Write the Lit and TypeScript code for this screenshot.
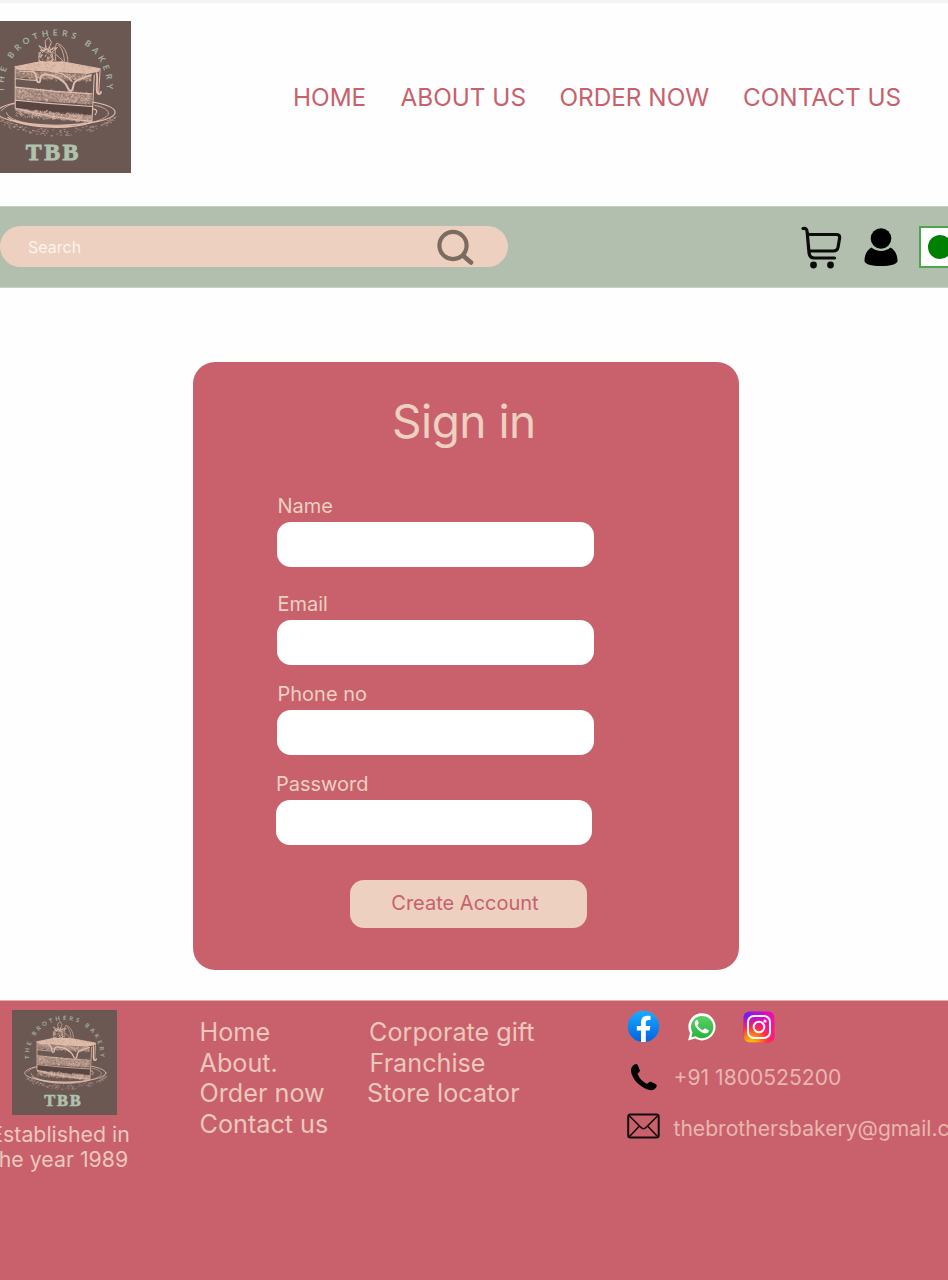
import { LitElement, html, svg, css } from "lit";
import { customElement, property } from "lit/decorators.js";

/** Small deterministic generator so the engraved texture is stable. */
function randomizer(seed: number) {
  let s = seed;
  return () => {
    s = (s * 16807) % 2147483647;
    return s / 2147483647;
  };
}

function strokes(seed: number, count: number, x0: number, x1: number, yTop: number, height: number, slope: number, len: number) {
  const r = randomizer(seed);
  let d = "";
  for (let i = 0; i < count; i++) {
    const x = x0 + r() * (x1 - x0);
    const y = yTop + r() * height + (x - x0) * slope;
    d += `M${x.toFixed(1)} ${y.toFixed(1)}l${(len * (r() - 0.3)).toFixed(1)} ${(len * (r() - 0.5)).toFixed(1)}`;
  }
  return d;
}

function crumbs() {
  const r = randomizer(77);
  let d = "";
  for (let i = 0; i < 110; i++) {
    const a = 0.06 * Math.PI + r() * 0.88 * Math.PI;
    const x = 160 + Math.cos(a) * (116 + r() * 10);
    const y = 192 + Math.sin(a) * (30 + r() * 17);
    d += `M${x.toFixed(1)} ${y.toFixed(1)}l${(1.5 + r() * 2).toFixed(1)} ${(r() * 3 - 1.5).toFixed(1)}`;
  }
  return d;
}

const HATCH_TOP = strokes(11, 230, 77, 230, 101, 17, 0.06, 7);
const HATCH_MID = strokes(23, 420, 77, 230, 138, 24, 0.07, 6);
const HATCH_LOW = strokes(37, 300, 77, 230, 181, 16, 0.09, 6);
const DARK_FLECKS = strokes(51, 90, 80, 230, 86, 12, 0.04, 7);
const FRUIT = strokes(63, 60, 124, 153, 56, 32, 0, 8);
const CRUMBS = crumbs();

@customElement("bakery-logo")
export class BakeryLogo extends LitElement {
  static styles = css`
    :host { display: block; }
    .art { display: block; width: 100%; height: 100%; }
    .ring { font: 700 17.5px Lato, sans-serif; fill: #a3b1a0; }
    .mark { font: 700 48px "Liberation Serif", serif; letter-spacing: 5px; fill: #afc2ae; stroke: #afc2ae; stroke-width: 1.8; }
  `;
  render() {
    return html`<svg class="art" viewBox="0 0 315 315" role="img" aria-label="The Brothers Bakery">
      <rect width="315" height="315" fill="#6b5853" />
      <path id="ring" d="M51 147V137A107 107 0 0 1 265 137V170" fill="none" />
      <text class="ring" textLength="350" lengthAdjust="spacing"><textPath href="#ring" textLength="350" lengthAdjust="spacing">THE BROTHERS BAKERY</textPath></text>
      <g fill="none" stroke="#e0bcab" stroke-linecap="round" stroke-linejoin="round">
        <ellipse cx="160" cy="189" rx="122" ry="27" stroke-width="2.4" />
        <path d="M46 186c12-12 22-14 30-15M57 190c3 18 60 28 112 27 50-1 92-10 99-24 2-8-12-16-28-18" stroke-width="1.600" />
        <path d="M60 200c28 21 120 27 170 11M73 206c28 12 80 14 116 11" stroke-width="2.6" />
      </g>
      <path d="M75 94L133 83 251 98 246 164 236 167 234 208C180 204 126 195 75 181Z" fill="#6b5853" />
      <path d="M75 95L125 84 170 84 251 99 248 105 225 110 78 101Z" fill="#dfbbaa" />
      <path d="M75 180l14-3c-1 8 50 16 145 18v13c-70-1-114-11-159-22z" fill="#c9a99b" opacity=".6" />
      <path d="M76 137q78 9 158 15v20q-80-4-158-10z" fill="#d1b0a2" opacity=".42" />
      <path d="M76 102l157 10v12q-80-5-157-7z" fill="#d1b0a2" opacity=".34" />
      <path d="M76 164q78 8 158 13v17q-84-4-158-14z" fill="#594642" />
      <g fill="none" stroke="#e0bcab" stroke-linecap="round" stroke-linejoin="round">
        <path d=${HATCH_TOP} stroke-width=".9" />
        <path d=${HATCH_MID} stroke-width=".9" />
        <path d=${HATCH_LOW} stroke-width="1" />
        <path d="M75 94L75 181Q150 201 234 208L239 112M75 95L130 84M170 84L251 99L248 150M76 119q20 3 42 4M76 137q80 10 158 14M76 164q78 9 158 13" stroke-width="2.2" />
        <path d="M110 104c8 4 8 8 10 18 1 7 7 7 7-1 0-8 5-11 13-10 20 3 30 8 39 19 5 6 6 15 11 15 7 0 3-13 9-19 7-6 20-9 33-14M244 108c3 14-2 31 1 40 2 5 7 4 8-1" stroke-width="4" />
        <path d="M148 105c22 1 34 7 45 20M84 104l24 1M236 182q13 1 5 12" stroke-width="2.4" />
        <path d=${FRUIT} stroke-width="1.500" />
        <path d="M125 82c-4-10 1-21 13-23 12 1 18 12 13 24-8 5-18 4-26-1ZM139 60l-2-18 7-8 6 10-7 18M139 59l-15-8 10 13M147 60l16-5-14 11" stroke-width="1.800" />
        <path d="M159 82c-2-18-1-30 2-36 15 4 23 21 23 38M165 50c8 8 11 20 12 33M160 70l15 13" stroke-width="1.700" stroke-dasharray="8 2" />
        <path d=${CRUMBS} stroke-width="1.400" opacity=".7" />
      </g>
      <path d=${DARK_FLECKS} fill="none" stroke="#a58277" stroke-width="1" opacity=".6" />
      <text class="mark" x="97" y="288" textLength="114" lengthAdjust="spacingAndGlyphs">TBB</text>
    </svg>`;
  }
}

@customElement("sign-in-field")
export class SignInField extends LitElement {
  @property() label = "";
  @property() type = "text";
  static styles = css`
    :host { display: block; }
    .label { display: block; font: 400 20px/25px Inter, sans-serif; padding-left: 0.5px; color: #edd0c0; margin-bottom: 3px; }
    .box { display: block; box-sizing: border-box; width: 316.5px; height: 45px; border: 0; border-radius: 14px; background: #fff; padding: 0 14px; font: 400 20px Inter, sans-serif; }
  `;
  render() {
    return html`<label><span class="label">${this.label}</span><input class="box" type=${this.type} /></label>`;
  }
}

const searchIcon = svg`<circle cx="16" cy="16.500" r="13.600" fill="none" stroke="#7c6b61" stroke-width="4.200"/><path d="M26.500 27l7.500 6.500" stroke="#7c6b61" stroke-width="4.600" stroke-linecap="round"/>`;

@customElement("app-root")
export class AppRoot extends LitElement {
  static styles = css`
    :host { display: block; width: 948px; height: 1280px; overflow: hidden; background: #fefefe; font-family: Inter, sans-serif; }
    .page { display: flex; flex-direction: column; width: 948px; height: 1280px; overflow: hidden; }
    .header { box-sizing: border-box; height: 206px; border-top: 3px solid #f4f4f4; display: flex; align-items: flex-start; padding-top: 17.5px; flex: none; }
    .logo { width: 152px; height: 152px; margin-left: -21.5px; flex: none; }
    .nav { display: grid; grid-template-columns: 107.5px 159px 183.5px 180px; margin: 61px 0 0 162.5px; color: #c8616c; font-size: 24.3px; line-height: 30px; white-space: nowrap; }
    .bar { box-sizing: border-box; height: 82px; flex: none; background: #b3bfae; border-top: 1px solid #c9d1c5; border-bottom: 1px solid #c9d1c5; display: flex; align-items: flex-start; overflow: hidden; }
    .search { box-sizing: border-box; width: 508px; height: 41px; margin-top: 19px; border-radius: 21px; background: #edd0c0; display: flex; align-items: center; padding: 0 33px 0 28px; justify-content: space-between; flex: none; }
    .hint { font-size: 16px; line-height: 20px; color: #fbf3ee; }
    .glass { width: 38px; height: 36px; display: block; }
    .cart { width: 42px; height: 44px; margin: 18px 0 0 292px; flex: none; }
    .user { width: 34px; height: 38px; margin: 21px 0 0 22px; flex: none; }
    .veg { box-sizing: border-box; width: 42px; height: 42px; margin: 19px 0 0 21px; border: 2px solid #4da64d; background: #fff; display: flex; align-items: center; justify-content: center; flex: none; }
    .dot { width: 24px; height: 24px; border-radius: 50%; background: #008000; }
    .card { box-sizing: border-box; width: 546px; height: 608px; margin: 74px 0 0 193px; border-radius: 22px; background: #c8616c; flex: none; padding: 29px 0 0 84px; display: flex; flex-direction: column; align-items: flex-start; }
    .title { margin: 0 0 43px 115px; font-weight: 400; font-size: 46px; letter-spacing: -0.5px; line-height: 60px; color: #edd0c0; white-space: nowrap; }
    .name { margin-bottom: 25px; }
    .email { margin-bottom: 17px; }
    .phone { margin-bottom: 17px; }
    .password { margin-left: -1.5px; margin-bottom: 35px; }
    .create { width: 237px; height: 48px; margin-left: 72.5px; padding: 0 6px 2px 0; border: 0; border-radius: 14px; background: #edd0c0; color: #c8616c; font: 400 20px/24px Inter, sans-serif; white-space: nowrap; }
    .footer { box-sizing: border-box; margin-top: 30px; height: 280px; flex: none; background: #c8616c; border-top: 1px solid #e1b0b3; color: #edc7bb; display: grid; grid-template-columns: 199.500px 167.5px 260px 321px; }
    .brand { padding-top: 8.5px; }
    .small { width: 105px; height: 105px; margin-left: 12px; }
    .since { width: 140px; margin: 7.5px 0 0 -10px; text-align: center; font-size: 21.3px; line-height: 25.3px; white-space: nowrap; }
    .links { padding-top: 16px; font-size: 25.2px; line-height: 30.5px; white-space: nowrap; }
    .shift1 { margin-left: 2px; }
    .shift2 { margin-left: 2.5px; }
    .contact { padding: 9px 0 0 0; }
    .social { display: flex; align-items: center; }
    .fb { width: 33px; height: 33px; }
    .wa { width: 29px; height: 30px; margin-left: 26.5px; }
    .ig { width: 32px; height: 32px; margin-left: 27px; }
    .line { display: flex; align-items: center; white-space: nowrap; font-size: 21.1px; line-height: 28px; }
    .tel { margin-top: 20.5px; }
    .mail { margin-top: 23px; }
    .phoneicon { width: 28px; height: 28px; margin: -1px 16px 0 2.5px; flex: none; }
    .mailicon { width: 33px; height: 26px; margin: -6px 13.5px 0 0; flex: none; }
    .value { color: #e9b6ae; }
  `;

  render() {
    return html`<div class="page">
      <header class="header">
        <bakery-logo class="logo"></bakery-logo>
        <nav class="nav"><span>HOME</span><span>ABOUT US</span><span>ORDER NOW</span><span>CONTACT US</span></nav>
      </header>
      <section class="bar">
        <div class="search"><span class="hint">Search</span><svg class="glass" viewBox="0 0 38 36">${searchIcon}</svg></div>
        <svg class="cart" viewBox="0 0 42 44" fill="none" stroke="#0b0b0a" stroke-width="3.200" stroke-linecap="round" stroke-linejoin="round">
          <path d="M3 3.500c3-.4 4 1 4.200 4L9 27.500c.3 3.500 2 5.500 5 5.500h20.500M7.500 9.500h28.500c3 0 4 1 3.600 3.500l-1.500 9c-.5 2.800-2 4-5 4H9" />
          <circle cx="13.500" cy="40" r="3.400" fill="#0b0b0a" stroke="none" /><circle cx="30.500" cy="40" r="3.400" fill="#0b0b0a" stroke="none" />
        </svg>
        <svg class="user" viewBox="0 0 34 38"><circle cx="17" cy="10.500" r="10.300" fill="#000" /><path d="M7.500 19.500c5 4.500 14 4.500 19 0C31 22 33.500 27 33.500 33c0 3-7 5-16.500 5S.5 36 .5 33c0-6 2.500-11 7-13.500Z" fill="#000" /></svg>
        <div class="veg"><div class="dot"></div></div>
      </section>
      <form class="card">
        <h1 class="title">Sign in</h1>
        <sign-in-field class="name" label="Name"></sign-in-field>
        <sign-in-field class="email" label="Email"></sign-in-field>
        <sign-in-field class="phone" label="Phone no"></sign-in-field>
        <sign-in-field class="password" label="Password" type="password"></sign-in-field>
        <button class="create" type="button">Create Account</button>
      </form>
      <footer class="footer">
        <div class="brand"><bakery-logo class="small"></bakery-logo><div class="since">Established in<br />the year 1989</div></div>
        <div class="links"><div>Home</div><div>About.</div><div>Order now</div><div>Contact us</div></div>
        <div class="links"><div class="shift1">Corporate gift</div><div class="shift2">Franchise</div><div>Store locator</div></div>
        <div class="contact">
          <div class="social">
            <svg class="fb" viewBox="0 0 33 33"><defs><linearGradient id="fbg" x2="0" y2="1"><stop stop-color="#18acfe" /><stop offset="1" stop-color="#0163e0" /></linearGradient></defs><circle cx="16.500" cy="16.500" r="15.700" fill="url(#fbg)" /><path d="M14 32V20.500H9.800V16H14v-3.500c0-4.500 2.500-6.700 6.300-6.700 1.300 0 2.300.1 3.200.3v4h-2c-2 0-2.700 1-2.700 2.600V16h4.600l-.8 4.500h-3.800V32Z" fill="#fff" /></svg>
            <svg class="wa" viewBox="0 0 29 30"><defs><linearGradient id="wag" x2="0" y2="1"><stop stop-color="#5bd066" /><stop offset="1" stop-color="#27b43e" /></linearGradient></defs><path d="M1 28.500l2-7.200A13.600 13.600 0 1 1 8.200 26.600Z" fill="#fff" /><path d="M4.300 25.300l1.200-4.500A11.200 11.200 0 1 1 8.600 24.200Z" fill="url(#wag)" /><path d="M10.800 8.500c-.5-.9-1.700-.5-2.200.2-3 3.500 1.800 8.500 4.400 10.500 3 2.300 6.500 3 8.200 1 .8-1 .8-2 .2-2.300l-3.200-1.500c-1-.3-1.300 2-2.500 1.500-2.400-1-4-2.500-5-4.500-.4-.9 1.300-1.500 1-2.400Z" fill="#fff" /></svg>
            <svg class="ig" viewBox="0 0 32 32"><defs><linearGradient id="iga" x1="0" y1="0" x2="1" y2=".5"><stop stop-color="#6420f5" /><stop offset=".55" stop-color="#d30bc8" /><stop offset="1" stop-color="#ff168e" /></linearGradient><radialGradient id="igb" cx=".25" cy="1.050" r=".9"><stop stop-color="#ffc90a" /><stop offset=".25" stop-color="#ff9a0b" /><stop offset=".6" stop-color="#ff2c45" /><stop offset="1" stop-color="#ff1a7a" stop-opacity="0" /></radialGradient></defs><rect x=".5" y=".5" width="31" height="31" rx="6" fill="url(#iga)" /><rect x=".5" y=".5" width="31" height="31" rx="6" fill="url(#igb)" /><g fill="none" stroke="#fff" stroke-width="2"><rect x="5" y="5" width="22" height="22" rx="6" /><circle cx="16" cy="16" r="5.300" /></g><circle cx="22" cy="10" r="1.600" fill="#fff" /></svg>
          </div>
          <div class="line tel"><svg class="phoneicon" viewBox="0 0 28 28"><path d="M4.500 1.500C6 .5 7 1 7.700 2l2 5c.5 1.300-.3 2-1.200 2.700-.8.700-1 1.300-.5 2.400 2 4 4.500 6.500 8.200 8.300 1 .5 1.700.2 2.300-.6.800-1.200 1.800-1.300 3-.8l4 2c1.300.7 1.500 1.700.9 3C25 27 21.500 28 17.500 26.500 9.500 23.500 2.500 16.500 1 8.500.5 5.500 2 3 4.500 1.500Z" fill="#000" /></svg><span class="value">+91 1800525200</span></div>
          <div class="line mail"><svg class="mailicon" viewBox="0 0 33 26" fill="none" stroke="#140b0c" stroke-width="2" stroke-linejoin="round"><rect x="1.200" y="1.500" width="30.500" height="23" rx="2" /><path d="M2 2.500L13.500 14q3 3.500 6 0L31 2.500M2 24L12.500 13M31 24L20.500 13" stroke-width="1.600" /></svg><span class="value">thebrothersbakery@gmail.com</span></div>
        </div>
      </footer>
    </div>`;
  }
}
